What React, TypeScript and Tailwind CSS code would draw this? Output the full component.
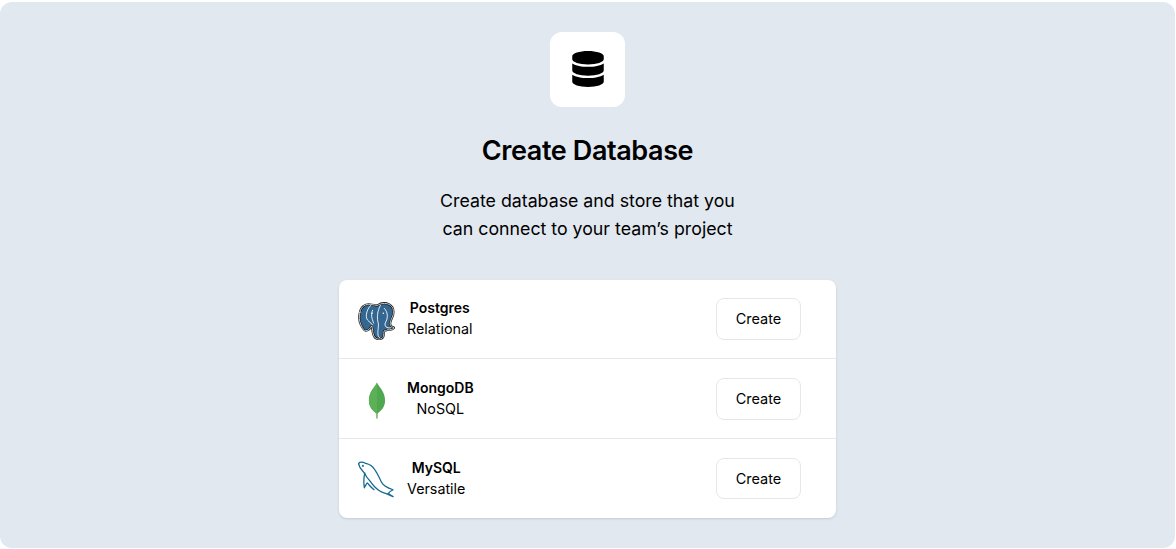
import { FaDatabase } from "react-icons/fa";

const elephant =
  "M2 10C3 4 8 1 13 2c2 0 5 1 7 1 3-2 8-3 12-1 4 2 5 6 4 11-1 3-3 6-3 9 0 2 2 3 4 4-1 2-4 2-7 2-1 1-2 1-3 1-1 2 0 4-1 6-1 3-5 3-7 2-3-1-3-4-4-7 0-2 0-4-1-6-1 2-3 5-6 5-2 0-3-2-5-6-2-4-2-9-1-13z";

function PostgresLogo() {
  return (
    <svg viewBox="0 0 38 38" className="mt-[4px] h-[38px] w-[38px]" fill="none" strokeLinecap="round" strokeLinejoin="round">
      <path d={elephant} fill="#336791" stroke="#111" strokeWidth="2.2" />
      <path d={elephant} stroke="#fff" strokeWidth="0.8" />
      <g stroke="#fff" strokeWidth="0.9">
        <path d="M13 3C8 8 7 17 11 19c2 3 3 2 4 4" />
        <path d="M15 8c-2 4-1 8 1 13" />
        <path d="M23 3c-3 5-4 13-2 19 0 6-2 12 1 14" />
        <path d="M27 6c4 4 4 10 1 15-1 3 1 6 6 5" />
      </g>
      <circle cx="14.5" cy="11" r="0.8" fill="#fff" />
      <circle cx="26" cy="11" r="0.8" fill="#fff" />
    </svg>
  );
}

function MongoLogo() {
  return (
    <svg viewBox="0 0 20 38" preserveAspectRatio="none" className="mt-[3px] h-[37px] w-[18px]">
      <path d="M10 0.5C8 5 1 10 1 19c0 7 5 11 8 13l.5 5.5h1L11 32c3-2 8-6 8-13C19 10 12 5 10 .5z" fill="#4fa74f" />
      <path d="M10 .5C8 5 1 10 1 19c0 7 5 11 8 13l.5 5.5H10z" fill="#5cb157" />
      <path d="M9.4 32h1.2l-.2 5.5h-.8z" fill="#c2bfa8" />
    </svg>
  );
}

function MysqlLogo() {
  return (
    <svg viewBox="0 0 38 38" className="mt-[3px] h-[38px] w-[38px]" fill="none" stroke="#136a8f" strokeWidth="1.3" strokeLinejoin="round" strokeLinecap="round">
      <path d="M.5 2C2 .5 5 .5 8 2c4 1 7 3 9 6 3 4 5 9 7 13 2 4 6 6 12 8-2 1-4 2-5 4l5 3-7-3c-5-1-9-4-12-7-3-3-5-7-8-10-1-2-2-4-4-6C3 8 1 5 .5 2z" />
      <path d="M7 12c-1 3-1 7-1 10l.5 5c1-2 2-4 3-5 2 2 4 5 7 7" />
      <circle cx="5" cy="4.5" r="0.4" />
    </svg>
  );
}

const databases = [
  { name: "Postgres", kind: "Relational", logo: <PostgresLogo />, height: "h-[79px]" },
  { name: "MongoDB", kind: "NoSQL", logo: <MongoLogo />, height: "h-20" },
  { name: "MySQL", kind: "Versatile", logo: <MysqlLogo />, height: "h-[79px]" },
];

export default function App() {
  return (
    <div className="h-[549px] bg-white pt-[2px] pr-px pb-px font-['Inter',sans-serif] text-black">
      <div className="flex h-full flex-col items-center rounded-xl bg-[#e2e8f0] pt-[30px]">
        <div className="flex h-[75px] w-[75px] items-center justify-center rounded-xl bg-white pb-px">
          <FaDatabase className="h-9 w-8" />
        </div>
        <h1 className="mt-[25px] text-[27px] leading-[38px] font-semibold tracking-[-0.4px]">Create Database</h1>
        <p className="mt-[17px] w-[320px] text-center text-[17.75px] leading-[28px]">
          Create database and store that you can connect to your team’s project
        </p>
        <div className="mt-[37px] w-[497px] rounded-lg bg-white shadow-sm">
          {databases.map((db, i) => (
            <div
              key={db.name}
              className={`flex items-center justify-between pr-[35px] pl-[19px] ${db.height} ${
                i < databases.length - 1 ? "border-b border-gray-200" : ""
              }`}
            >
              <div className="flex items-center gap-3">
                <div className="flex w-[37px] justify-center">{db.logo}</div>
                <div className="flex flex-col items-center">
                  <span className="-mt-px text-[14px] leading-5 font-semibold">{db.name}</span>
                  <span className="mt-px text-[14.3px] leading-5">{db.kind}</span>
                </div>
              </div>
              <button
                className={`w-[85px] rounded-lg border border-gray-200 bg-white text-[14.5px] ${
                  i === 2 ? "h-[41px]" : "h-[42px]"
                }`}
              >
                Create
              </button>
            </div>
          ))}
        </div>
      </div>
    </div>
  );
}
